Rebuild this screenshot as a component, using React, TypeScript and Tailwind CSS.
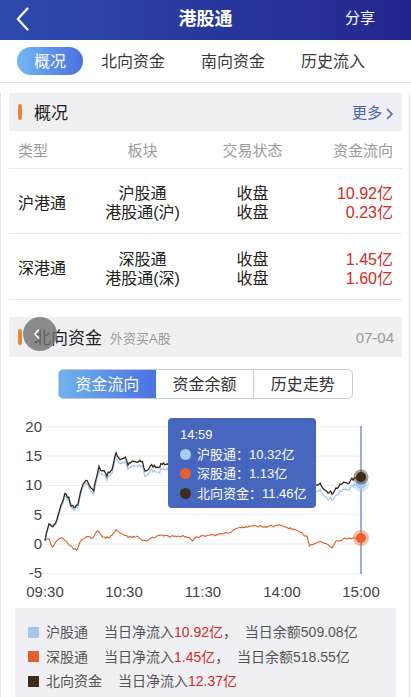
type Key = [number, number];

const RED = '#d22b26';

// 北向资金 key points, minute index -> 亿
const northKeys: Key[] = [
	[0, 0.6], [3, 3.7], [5, 3.0], [8, 3.3], [11, 5.5], [15, 8.5], [18, 8], [20, 6.2],
	[25, 6.4], [27, 8.7], [31, 10.9], [35, 9.8], [37, 9.3], [41, 12.9], [45, 12.5],
	[47, 11.8], [51, 13], [54, 15.4], [57, 14.6], [61, 14.9], [63, 13.6], [67, 13.9],
	[74, 13.9], [76, 12.4], [80, 13.2], [85, 13.3], [90, 13.8], [120, 12.8], [160, 11.8],
	[190, 10.8], [206, 9.9], [210, 10], [214, 9.5], [218, 8.6], [220, 9.5], [226, 10.2],
	[232, 10.8], [237, 11.2], [240, 11.46],
];

const southKeys: Key[] = [
	[0, 0.6], [2.5, 1.1], [6, -0.6], [10, 0.7], [14, 1.0], [17, 0.3], [21, -0.6], [24, -0.9],
	[27, 0.5], [31, 1.2], [35, 0.9], [40, 2.1], [44, 1.2], [49, 1.2], [54, 2.4], [59, 1.9],
	[63, 1.2], [70, 1.4], [77, 0.3], [82, 1.2], [92, 1.3], [110, 1.2], [112, 0.6], [118, 1.4],
	[133, 1.6], [140, 2.1], [148, 2.7], [158, 3.1], [168, 3.0], [178, 3.1], [186, 2.7],
	[194, 2.0], [199, 1.4], [201, -0.2], [206, 0.3], [213, 0], [218, -0.5], [221, 0.3],
	[227, 0.8], [233, 0.9], [240, 1.13],
];

const gapKeys: Key[] = [[0, 0.1], [10, 0.3], [40, 0.6], [90, 0.9], [240, 1.14]];

const interp = (keys: Key[], m: number) => {
	for (let i = 1; i < keys.length; i++) {
		const [m1, v1] = keys[i];
		const [m0, v0] = keys[i - 1];
		if (m <= m1) return v0 + ((v1 - v0) * (m - m0)) / (m1 - m0);
	}
	return keys[keys.length - 1][1];
};

const rng = (seed: number) => {
	let s = seed;
	return () => {
		s = (s * 16807) % 2147483647;
		return s / 2147483647;
	};
};

const series = (keys: Key[], amp: number, seed: number) => {
	const r = rng(seed);
	let n = 0;
	return Array.from({ length: 241 }, (_, m) => {
		n = n * 0.5 + (r() - 0.5) * amp;
		return m === 240 || m === 0 ? interp(keys, m) : interp(keys, m) + n;
	});
};

const north = series(northKeys, 0.7, 7);
const south = series(southKeys, 0.35, 19);
const r2 = rng(31);
const hu = north.map((v, m) =>
	m === 240 ? 10.32 : v - interp(gapKeys, m) + (r2() - 0.5) * 0.15,
);

const px = (m: number) => 45 + (m * 316) / 240;
const py = (v: number) => 545 - v * 5.86;
const toPath = (vals: number[]) =>
	vals
		.map((v, m) => `${m ? 'L' : 'M'}${px(m).toFixed(1)} ${py(v).toFixed(1)}`)
		.join(' ');

const yTicks = [20, 15, 10, 5, 0, -5];
const xTicks = ['09:30', '10:30', '11:30', '14:00', '15:00'];

const tabs = ['北向资金', '南向资金', '历史流入'];

const SectionBar = () => (
	<span className="w-[4px] h-[16px] rounded-[2px] bg-[#e0893b] shrink-0" />
);

const rows = [
	{ type: '沪港通', boards: ['沪股通', '港股通(沪)'], flows: ['10.92亿', '0.23亿'] },
	{ type: '深港通', boards: ['深股通', '港股通(深)'], flows: ['1.45亿', '1.60亿'] },
];

const TooltipDot = ({ color }: { color: string }) => (
	<span className="w-[11px] h-[11px] rounded-full mr-[6px] shrink-0" style={{ backgroundColor: color }} />
);

export default function App() {
	return (
		<div className="w-[411px] h-[697px] overflow-hidden bg-white text-[#333] font-['Liberation_Sans','Noto_Sans_CJK_SC',sans-serif]">
			{/* top bar */}
			<div className="h-10 flex items-center bg-linear-to-r from-[#2d4aae] to-[#23268c] text-white">
				<div className="w-[90px] pl-[16px] flex items-center -mt-[2px]">
					<svg width="13" height="24" viewBox="0 0 13 24">
						<polyline points="11.5,1.5 1.8,12 11.5,22.5" fill="none" stroke="white" strokeWidth="2.2" strokeLinecap="round" strokeLinejoin="round" />
					</svg>
				</div>
				<div className="flex-1 text-center text-[18px] font-bold leading-none -mt-[3px]">港股通</div>
				<div className="w-[90px] text-right pr-[36px] text-[15px] -mt-[4px]">分享</div>
			</div>

			{/* tabs */}
			<div className="h-[43px] flex items-center pl-[17px] border-b border-[#e2e2e2]">
				<div className="h-[28px] px-[17px] pt-[2px] rounded-full flex items-center text-white text-[16px] bg-linear-to-r from-[#73b7ee] to-[#4b6fe2]">
					概况
				</div>
				{tabs.map((t) => (
					<div key={t} className="px-[18px] pt-[2px] text-[16px] text-[#3a3a3a]">
						{t}
					</div>
				))}
			</div>

			<div className="w-[410px] border-x border-[#e4e4e4] pb-6">
				{/* 概况 section */}
				<div className="mt-[10px] ml-2 mr-[7px] h-[38px] bg-[#efeff4] flex items-center pl-[9px] pr-[8px]">
					<SectionBar />
					<span className="ml-[12px] pt-[3px] text-[17px] text-[#222]">概况</span>
					<span className="ml-auto pt-[3px] flex items-center text-[15px] text-[#4a63b3]">
						更多
						<svg width="9" height="14" viewBox="0 0 9 14" className="ml-[3px]">
							<polyline points="2,2 7,7 2,12" fill="none" stroke="#4a63b3" strokeWidth="1.5" />
						</svg>
					</span>
				</div>

				<div className="ml-2 mr-[7px]">
					<div className="h-[38px] pt-[3px] flex items-center text-[15px] text-[#9a9a9a] border-b border-[#e8e8e8]">
						<span className="w-[80px] pl-[9px]">类型</span>
						<span className="w-[107px] text-center">板块</span>
						<span className="w-[113px] text-center">交易状态</span>
						<span className="flex-1 text-right pr-[9px]">资金流向</span>
					</div>
					{rows.map((r, i) => (
						<div
							key={r.type}
							className={`${i ? 'h-[66px]' : 'h-[65px]'} pt-[4px] flex items-center text-[16px] leading-[19px] border-b border-[#e8e8e8]`}
						>
							<span className="w-[80px] pl-[9px] text-[#222]">{r.type}</span>
							<div className="w-[107px] flex flex-col items-center text-[#222]">
								{r.boards.map((b) => (
									<span key={b}>{b}</span>
								))}
							</div>
							<div className="w-[113px] flex flex-col items-center text-[#222]">
								<span>收盘</span>
								<span>收盘</span>
							</div>
							<div className="flex-1 flex flex-col items-end pr-[9px]" style={{ color: RED }}>
								{r.flows.map((f) => (
									<span key={f}>{f}</span>
								))}
							</div>
						</div>
					))}
				</div>

				{/* 北向资金 section */}
				<div className="relative mt-[17px] ml-2 mr-[7px] h-[40px] bg-[#efeff4] flex items-center pl-[9px] pr-[8px]">
					<SectionBar />
					<span className="ml-[12px] pt-[3px] text-[17px] text-[#222]">北向资金</span>
					<span className="ml-[8px] pt-[3px] text-[13px] text-[#9a9a9a]">外资买A股</span>
					<span className="ml-auto pt-[3px] text-[15px] text-[#9a9a9a]">07-04</span>
					<div className="absolute left-[14px] top-0 w-[34px] h-[34px] rounded-full bg-[#707070]/80 flex items-center justify-center">
						<svg width="8" height="12" viewBox="0 0 8 12" className="-ml-[6px]">
							<polyline points="6,1.5 2,6 6,10.5" fill="none" stroke="white" strokeWidth="1.6" />
						</svg>
					</div>
				</div>

				<div className="mt-[12px] mx-auto w-[295px] h-[30px] grid grid-cols-3 rounded-[5px] border border-[#c6cad6] overflow-hidden text-[16px]">
					<div className="pt-[2px] flex items-center justify-center text-white bg-linear-to-r from-[#6fb3ec] to-[#4b70e1]">资金流向</div>
					<div className="pt-[2px] flex items-center justify-center border-r border-[#c6cad6] text-[#333]">资金余额</div>
					<div className="pt-[2px] flex items-center justify-center text-[#333]">历史走势</div>
				</div>

				{/* chart */}
				<div className="relative mt-[5px] h-[204px]">
					<svg width="408" height="204" viewBox="1 405 408 204" fontFamily="Liberation Sans, sans-serif">
						{yTicks.map((t) => (
							<g key={t}>
								<line x1="43" x2="363" y1={py(t)} y2={py(t)} stroke="#ececec" strokeWidth="1" />
								<text x="42" y={py(t) + 5} textAnchor="end" fontSize="15" fill="#444">
									{t}
								</text>
							</g>
						))}
						{xTicks.map((t, i) => (
							<text key={t} x={45 + i * 79} y="598" textAnchor="middle" fontSize="15" fill="#444">
								{t}
							</text>
						))}
						<line x1="361" x2="361" y1="427" y2="575" stroke="#5a78c8" strokeWidth="1.2" />
						<path d={toPath(south)} fill="none" stroke="#e05a28" strokeWidth="1.1" />
						<path d={toPath(hu)} fill="none" stroke="#a8c9ee" strokeWidth="1.3" />
						<path d={toPath(north)} fill="none" stroke="#35261a" strokeWidth="1.3" />
						<circle cx="361" cy="485" r="8" fill="#a8c9ee" opacity="0.45" />
						<circle cx="361" cy="485" r="5" fill="#a8c9ee" />
						<circle cx="361" cy="539" r="8" fill="#e86a3a" opacity="0.45" />
						<circle cx="361" cy="539" r="5" fill="#e8612f" />
						<circle cx="361" cy="478" r="7.5" fill="#3d2b1b" opacity="0.45" />
						<circle cx="361" cy="478" r="5" fill="#3d2b1b" />
					</svg>
					<div className="absolute left-[167px] top-[14px] w-[148px] h-[90px] rounded-[4px] bg-[#4766bd] text-white text-[13px] leading-[19.5px] pl-[12px] pt-[7px]">
						<div>14:59</div>
						<div className="flex items-center">
							<TooltipDot color="#a9cdf0" />
							沪股通：10.32亿
						</div>
						<div className="flex items-center">
							<TooltipDot color="#e4612f" />
							深股通：1.13亿
						</div>
						<div className="flex items-center">
							<TooltipDot color="#3d2b1b" />
							北向资金：11.46亿
						</div>
					</div>
				</div>

				{/* legend */}
				<div className="ml-[14px] w-[381px] bg-[#efeff4] pt-[12px] pb-4 pl-[13px] text-[14px] leading-[24.5px] text-[#555]">
					<div className="flex items-center">
						<span className="w-[11px] h-[11px] bg-[#a3c8ee] mr-[7px]" />
						<span className="mr-4">沪股通</span>
						当日净流入<span style={{ color: RED }}>10.92亿</span>，{'\u00a0\u00a0'}当日余额509.08亿
					</div>
					<div className="flex items-center">
						<span className="w-[11px] h-[11px] bg-[#e06030] mr-[7px]" />
						<span className="mr-4">深股通</span>
						当日净流入<span style={{ color: RED }}>1.45亿</span>，{'\u00a0\u00a0'}当日余额518.55亿
					</div>
					<div className="flex items-center">
						<span className="w-[11px] h-[11px] bg-[#3d2b1b] mr-[7px]" />
						<span className="mr-4">北向资金</span>
						当日净流入<span style={{ color: RED }}>12.37亿</span>
					</div>
				</div>
			</div>
		</div>
	);
}
